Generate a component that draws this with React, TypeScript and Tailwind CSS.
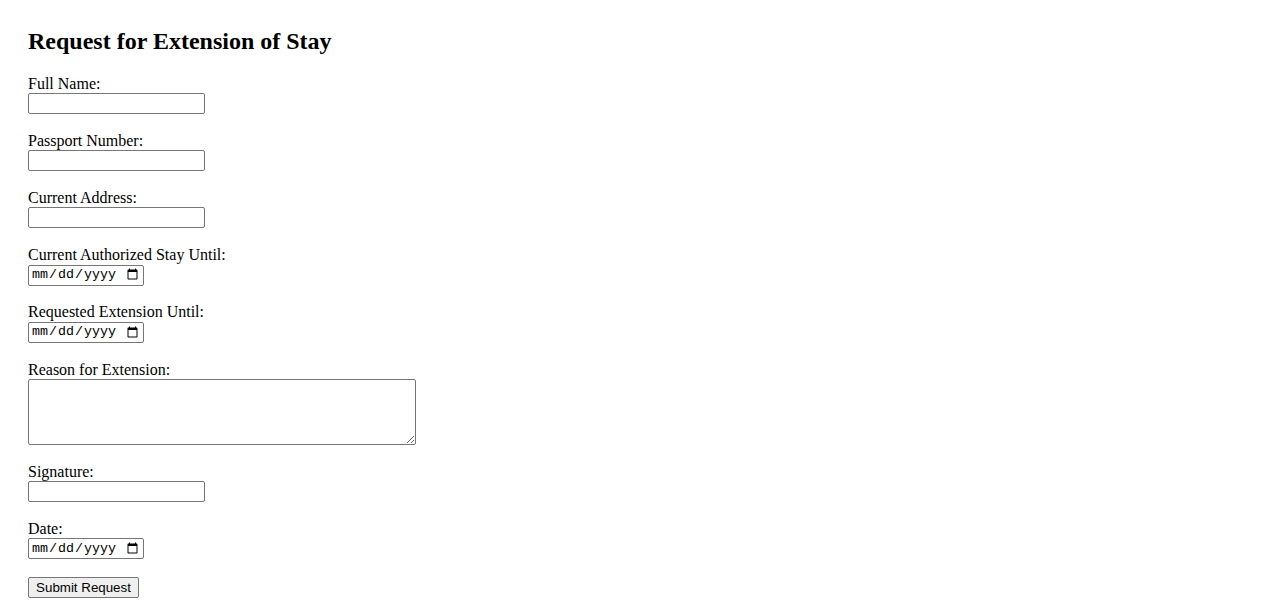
const serif = { fontFamily: "'Liberation Serif', 'Times New Roman', serif" };

const textInput =
  "block h-[21px] w-[177px] rounded-[2px] border border-[#767676] bg-white px-[2px] text-[13.33px] font-['Liberation_Sans',Arial,sans-serif]";
const dateInput =
  "block h-[21px] w-[116px] rounded-[2px] border border-[#767676] bg-white px-[2px] text-[13.33px] text-black font-['Liberation_Mono','DejaVu_Sans_Mono',monospace]";

function Field({ label, children, last }: { label: string; children: React.ReactNode; last?: boolean }) {
  return (
    <div className={last ? "mb-[16px]" : "mb-[17.8px]"}>
      <label className="block text-[16px] leading-[18.4px]">{label}</label>
      {children}
    </div>
  );
}

export default function App() {
  return (
    <div className="min-h-screen bg-white px-[28px] pt-[28px] text-black" style={serif}>
      <h2 className="mb-[19px] text-[24px] font-bold leading-[27.6px]">Request for Extension of Stay</h2>
      <form>
        <Field label="Full Name:">
          <input type="text" className={textInput} />
        </Field>
        <Field label="Passport Number:">
          <input type="text" className={textInput} />
        </Field>
        <Field label="Current Address:">
          <input type="text" className={textInput} />
        </Field>
        <Field label="Current Authorized Stay Until:">
          <input type="date" className={dateInput} />
        </Field>
        <Field label="Requested Extension Until:">
          <input type="date" className={dateInput} />
        </Field>
        <div className="mb-[17.6px]">
          <label className="block text-[16px] leading-[18.4px]">Reason for Extension:</label>
          <textarea className="block h-[66px] w-[388px] rounded-[2px] border border-[#767676] bg-white text-[13.33px]" />
        </div>
        <Field label="Signature:">
          <input type="text" className={textInput} />
        </Field>
        <Field label="Date:" last>
          <input type="date" className={dateInput} />
        </Field>
        <button
          type="button"
          className="h-[21px] w-[111px] rounded-[2px] border border-[#767676] bg-[#efefef] text-[13.33px] leading-[19px] font-['Liberation_Sans',Arial,sans-serif]"
        >
          Submit Request
        </button>
      </form>
    </div>
  );
}
